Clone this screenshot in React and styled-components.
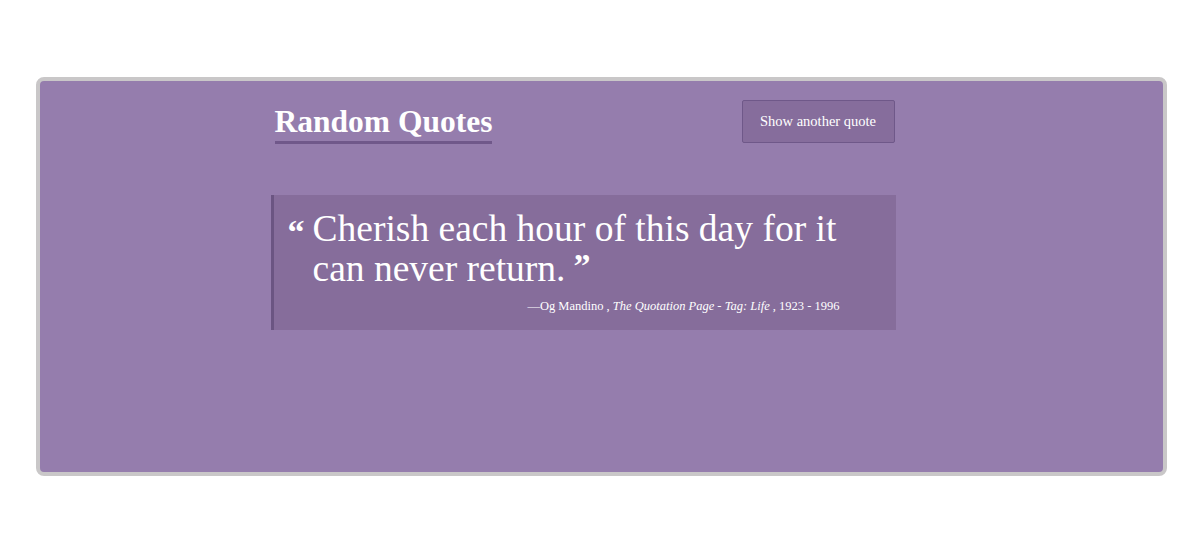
import React from "react";
import styled, { createGlobalStyle } from "styled-components";

const Global = createGlobalStyle`
  html, body { margin: 0; padding: 0; background: #ffffff; }
  body { font-family: "Liberation Serif", "Times New Roman", serif; }
`;

const Page = styled.div`
  padding: 77px 33px 0 36px;
`;

const Frame = styled.div`
  box-sizing: border-box;
  height: 399px;
  background: #957dad;
  border: 4px solid #c9c7c8;
  border-radius: 8px;
  display: flex;
  justify-content: center;
  padding-top: 19px;
`;

const Column = styled.div`
  width: 625px;
  margin-right: 37px;
  display: flex;
  flex-direction: column;
`;

const Header = styled.div`
  display: flex;
  justify-content: space-between;
  align-items: flex-start;
  padding-left: 4px;
`;

const Title = styled.h1`
  margin: 0;
  margin-top: 5px;
  font-size: 31.5px;
  font-weight: 700;
  color: #ffffff;
  line-height: 34px;
  padding-bottom: 2px;
  border-bottom: 3px solid #70588a;
`;

const Button = styled.button`
  box-sizing: border-box;
  width: 153px;
  height: 43px;
  margin-right: 1px;
  background: #866d9c;
  border: 1px solid #6f5889;
  border-radius: 2px;
  color: #ffffff;
  font-family: "Liberation Serif", "Times New Roman", serif;
  font-size: 14.5px;
  cursor: pointer;
`;

const QuoteBox = styled.blockquote`
  box-sizing: border-box;
  margin: 51px 0 0 0;
  height: 135px;
  background: #866d9b;
  border-left: 3px solid #6b5582;
  padding: 14px 56px 0 14px;
  display: flex;
  flex-direction: column;
`;

const QuoteText = styled.p`
  margin: 0;
  display: flex;
  color: #ffffff;
  font-size: 37.5px;
  line-height: 40px;
`;

const OpenMark = styled.span`
  flex: none;
  font-weight: 700;
  font-size: 34px;
  line-height: 1;
  margin: 6px 8px 0 0;
`;

const CloseMark = styled.span`
  display: inline-block;
  vertical-align: top;
  font-weight: 700;
  font-size: 34px;
  line-height: 34px;
  margin-left: 8px;
`;

const Words = styled.span`
  display: block;
`;

const Cite = styled.div`
  margin-top: 10px;
  text-align: right;
  color: #ffffff;
  font-size: 12.5px;
`;

const Em = styled.em`
  font-style: italic;
`;

export default function App() {
  return (
    <>
      <Global />
      <Page>
        <Frame>
          <Column>
            <Header>
              <Title>Random Quotes</Title>
              <Button>Show another quote</Button>
            </Header>
            <QuoteBox>
              <QuoteText>
                <OpenMark>“</OpenMark>
                <Words>
                  Cherish each hour of this day for it can never return.
                  <CloseMark>”</CloseMark>
                </Words>
              </QuoteText>
              <Cite>
                —Og Mandino , <Em>The Quotation Page - Tag: Life</Em> , 1923 - 1996
              </Cite>
            </QuoteBox>
          </Column>
        </Frame>
      </Page>
    </>
  );
}
